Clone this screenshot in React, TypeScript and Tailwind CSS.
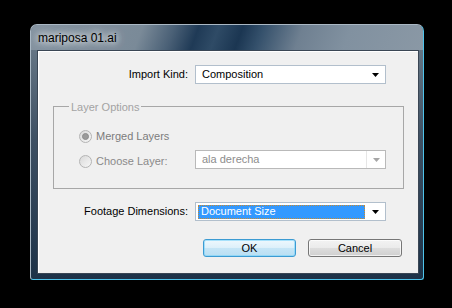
import React from "react";

const font = "font-['Liberation_Sans',Arial,sans-serif]";

function Arrow({ disabled }: { disabled?: boolean }) {
  return (
    <svg width="7" height="4" viewBox="0 0 7 4" className="block">
      <polygon points="0,0 7,0 3.5,4" fill={disabled ? "#a6a6a6" : "#000"} />
    </svg>
  );
}

function Select({
  value,
  disabled,
  selected,
}: {
  value: string;
  disabled?: boolean;
  selected?: boolean;
}) {
  return (
    <div
      className={
        "flex h-[19px] w-[191px] items-center border bg-white " +
        (disabled ? "border-[#b9b9b9]" : "border-[#b2bfcc]")
      }
    >
      <div className="flex h-full flex-1 items-center pl-[2px]">
        {selected ? (
          <div className="flex h-[14px] w-[167px] items-center border border-dotted border-[#c98a2e] bg-[#3399ff] pl-[2px] text-white">
            {value}
          </div>
        ) : (
          <span className={"pl-[4px] " + (disabled ? "text-[#8d8d8d]" : "text-black")}>
            {value}
          </span>
        )}
      </div>
      <div
        className={
          "flex h-full w-[19px] items-center justify-center " +
          (disabled ? "border-l border-[#e6e6e6]" : "")
        }
      >
        <Arrow disabled={disabled} />
      </div>
    </div>
  );
}

function Radio({ checked }: { checked?: boolean }) {
  return (
    <div className="flex h-[13px] w-[13px] items-center justify-center rounded-full border border-[#b4b4b4] bg-[linear-gradient(135deg,#d9d9d9,#f7f7f7)]">
      {checked && (
        <div className="h-[7px] w-[7px] rounded-full border border-[#8c8c8c] bg-[#9a9a9a]" />
      )}
    </div>
  );
}

export default function App() {
  return (
    <div className={"h-[308px] w-[452px] bg-black pl-[30px] pt-[24px] text-[11px] " + font}>
      <div className="flex h-[256px] w-[394px] flex-col overflow-hidden rounded-t-[7px] rounded-b-[3px] border border-[#aab8c4] border-r-[#4ec3ea] border-b-[#4ec3ea] bg-[linear-gradient(to_bottom,#6f7f8d_0%,#3e5063_45%,#1d3248_100%)]">
        {/* title bar */}
        <div className="flex h-[25px] items-center bg-[linear-gradient(110deg,#8593a0_0%,#7a8a98_28%,#4a6076_36%,#1f3a56_42%,#2f4b66_47%,#1b3652_53%,#34506b_58%,#6f8091_68%,#8191a0_80%,#8a98a5_100%)] pl-[7px]">
          <span className="text-[12px] text-black [text-shadow:0_0_6px_rgba(255,255,255,0.9),0_0_10px_rgba(255,255,255,0.8),0_0_14px_rgba(255,255,255,0.5)]">
            mariposa 01.ai
          </span>
        </div>
        {/* client */}
        <div className="flex flex-1 pl-[6px] pr-[4px] pb-[5px]">
          <div className="flex h-[224px] w-[382px] flex-col border border-[#3a4654] bg-[#f0f0f0] shadow-[inset_1px_1px_0_#ffffff] text-black">
            <div className="mt-[14px] grid grid-cols-[157px_191px] items-center">
              <span className="pr-[7px] text-right">Import Kind:</span>
              <Select value="Composition" />
            </div>

            <div className="relative ml-[15px] mt-[22px] h-[83px] w-[351px] border border-[#a7a7a7]">
              <span className="absolute -top-[8px] left-[15px] bg-[#f0f0f0] px-[2px] text-[#a3a3a3]">
                Layer Options
              </span>
              <div className="flex flex-col pl-[25px] pt-[23px]">
                <div className="flex h-[13px] items-center gap-[4px] text-[#7c7c7c]">
                  <Radio checked />
                  <span>Merged Layers</span>
                </div>
                <div className="mt-[7px] grid grid-cols-[116px_191px]">
                  <div className="mt-[5px] flex h-[13px] items-center gap-[4px] text-[#8a8a8a]">
                    <Radio />
                    <span>Choose Layer:</span>
                  </div>
                  <Select value="ala derecha" disabled />
                </div>
              </div>
            </div>

            <div className="mt-[13px] grid grid-cols-[157px_191px] items-center">
              <span className="pr-[7px] text-right">Footage Dimensions:</span>
              <Select value="Document Size" selected />
            </div>

            <div className="mt-[18px] flex justify-end gap-[12px] pr-[16px]">
              <button className="flex h-[18px] w-[93px] items-center justify-center rounded-[3px] border border-[#3c9bd2] bg-[linear-gradient(to_bottom,#eef8fd_0%,#ddf0fa_48%,#c5e5f6_52%,#b9dff3_100%)] shadow-[inset_0_0_0_1px_rgba(120,210,250,0.6)]">
                OK
              </button>
              <button className="flex h-[18px] w-[94px] items-center justify-center rounded-[3px] border border-[#767676] bg-[linear-gradient(to_bottom,#f3f3f3_0%,#ebebeb_48%,#dddddd_52%,#cfcfcf_100%)] shadow-[inset_0_0_0_1px_rgba(255,255,255,0.7)]">
                Cancel
              </button>
            </div>
          </div>
        </div>
      </div>
    </div>
  );
}
